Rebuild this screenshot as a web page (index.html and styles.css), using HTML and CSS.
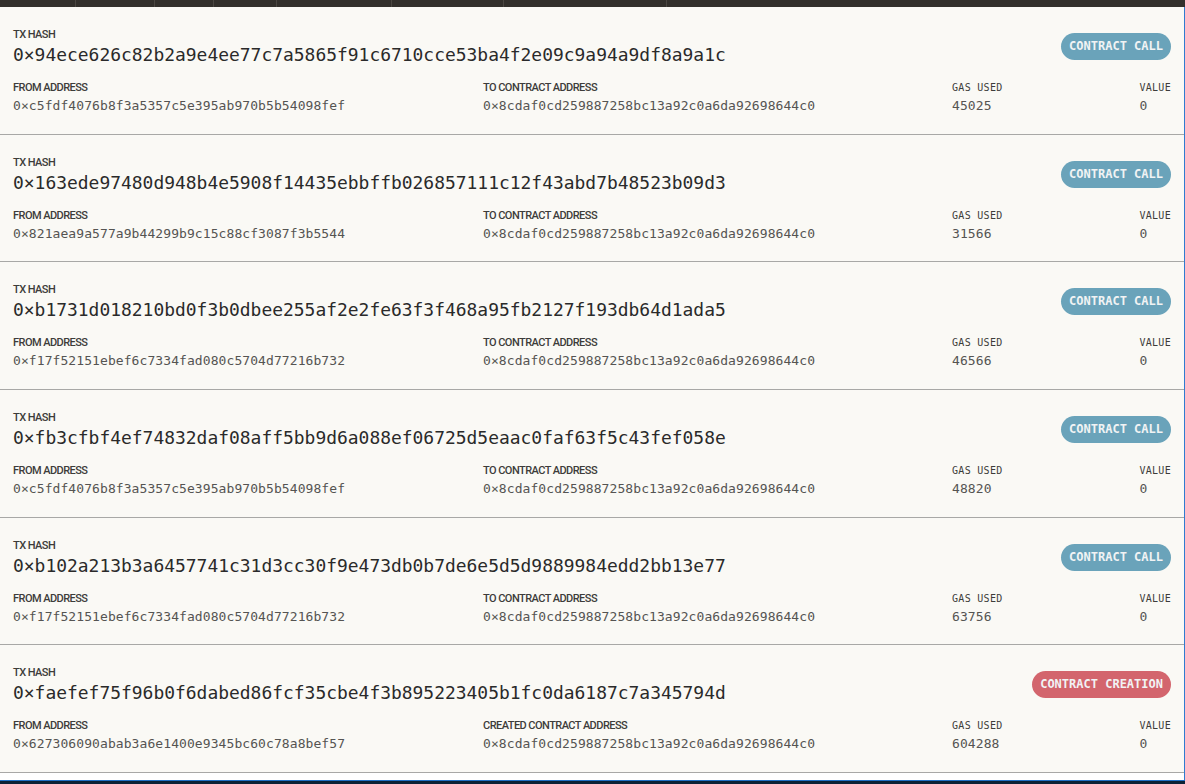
FILE: index.html
```html
<!DOCTYPE html>
<html>
<head>
<meta charset="utf-8">
<link rel="stylesheet" href="styles.css">
</head>
<body>
<div class="app">
  <div class="topbar">
    <div class="tb w1"></div><div class="tb w2"></div><div class="tb w3"></div><div class="tb w4"></div><div class="tb w5"></div><div class="tb w6"></div><div class="tb w7"></div>
  </div>
  <main class="content">
    <div class="tx">
      <div class="tx-top">
        <div>
          <div class="label">TX HASH</div>
          <div class="hash">0×94ece626c82b2a9e4ee77c7a5865f91c6710cce53ba4f2e09c9a94a9df8a9a1c</div>
        </div>
        <span class="badge call">CONTRACT CALL</span>
      </div>
      <div class="tx-info">
        <div><div class="label">FROM ADDRESS</div><div class="addr">0×c5fdf4076b8f3a5357c5e395ab970b5b54098fef</div></div>
        <div><div class="label">TO CONTRACT ADDRESS</div><div class="addr">0×8cdaf0cd259887258bc13a92c0a6da92698644c0</div></div>
        <div><div class="mlabel">GAS USED</div><div class="addr">45025</div></div>
        <div><div class="mlabel">VALUE</div><div class="addr">0</div></div>
      </div>
    </div>
    <div class="tx">
      <div class="tx-top">
        <div>
          <div class="label">TX HASH</div>
          <div class="hash">0×163ede97480d948b4e5908f14435ebbffb026857111c12f43abd7b48523b09d3</div>
        </div>
        <span class="badge call">CONTRACT CALL</span>
      </div>
      <div class="tx-info">
        <div><div class="label">FROM ADDRESS</div><div class="addr">0×821aea9a577a9b44299b9c15c88cf3087f3b5544</div></div>
        <div><div class="label">TO CONTRACT ADDRESS</div><div class="addr">0×8cdaf0cd259887258bc13a92c0a6da92698644c0</div></div>
        <div><div class="mlabel">GAS USED</div><div class="addr">31566</div></div>
        <div><div class="mlabel">VALUE</div><div class="addr">0</div></div>
      </div>
    </div>
    <div class="tx">
      <div class="tx-top">
        <div>
          <div class="label">TX HASH</div>
          <div class="hash">0×b1731d018210bd0f3b0dbee255af2e2fe63f3f468a95fb2127f193db64d1ada5</div>
        </div>
        <span class="badge call">CONTRACT CALL</span>
      </div>
      <div class="tx-info">
        <div><div class="label">FROM ADDRESS</div><div class="addr">0×f17f52151ebef6c7334fad080c5704d77216b732</div></div>
        <div><div class="label">TO CONTRACT ADDRESS</div><div class="addr">0×8cdaf0cd259887258bc13a92c0a6da92698644c0</div></div>
        <div><div class="mlabel">GAS USED</div><div class="addr">46566</div></div>
        <div><div class="mlabel">VALUE</div><div class="addr">0</div></div>
      </div>
    </div>
    <div class="tx">
      <div class="tx-top">
        <div>
          <div class="label">TX HASH</div>
          <div class="hash">0×fb3cfbf4ef74832daf08aff5bb9d6a088ef06725d5eaac0faf63f5c43fef058e</div>
        </div>
        <span class="badge call">CONTRACT CALL</span>
      </div>
      <div class="tx-info">
        <div><div class="label">FROM ADDRESS</div><div class="addr">0×c5fdf4076b8f3a5357c5e395ab970b5b54098fef</div></div>
        <div><div class="label">TO CONTRACT ADDRESS</div><div class="addr">0×8cdaf0cd259887258bc13a92c0a6da92698644c0</div></div>
        <div><div class="mlabel">GAS USED</div><div class="addr">48820</div></div>
        <div><div class="mlabel">VALUE</div><div class="addr">0</div></div>
      </div>
    </div>
    <div class="tx">
      <div class="tx-top">
        <div>
          <div class="label">TX HASH</div>
          <div class="hash">0×b102a213b3a6457741c31d3cc30f9e473db0b7de6e5d5d9889984edd2bb13e77</div>
        </div>
        <span class="badge call">CONTRACT CALL</span>
      </div>
      <div class="tx-info">
        <div><div class="label">FROM ADDRESS</div><div class="addr">0×f17f52151ebef6c7334fad080c5704d77216b732</div></div>
        <div><div class="label">TO CONTRACT ADDRESS</div><div class="addr">0×8cdaf0cd259887258bc13a92c0a6da92698644c0</div></div>
        <div><div class="mlabel">GAS USED</div><div class="addr">63756</div></div>
        <div><div class="mlabel">VALUE</div><div class="addr">0</div></div>
      </div>
    </div>
    <div class="tx">
      <div class="tx-top">
        <div>
          <div class="label">TX HASH</div>
          <div class="hash">0×faefef75f96b0f6dabed86fcf35cbe4f3b895223405b1fc0da6187c7a345794d</div>
        </div>
        <span class="badge create">CONTRACT CREATION</span>
      </div>
      <div class="tx-info">
        <div><div class="label">FROM ADDRESS</div><div class="addr">0×627306090abab3a6e1400e9345bc60c78a8bef57</div></div>
        <div><div class="label">CREATED CONTRACT ADDRESS</div><div class="addr">0×8cdaf0cd259887258bc13a92c0a6da92698644c0</div></div>
        <div><div class="mlabel">GAS USED</div><div class="addr">604288</div></div>
        <div><div class="mlabel">VALUE</div><div class="addr">0</div></div>
      </div>
    </div>
  </main>
  <div class="taskbar"></div>
</div>
</body>
</html>
```

FILE: styles.css
```css
html, body {
  margin: 0;
  padding: 0;
  width: 1185px;
  height: 784px;
  overflow: hidden;
  background: #ffffff;
}

.app {
  display: flex;
  flex-direction: column;
  height: 784px;
}

.topbar {
  display: flex;
  height: 7px;
  background: #33302c;
  flex: none;
}

.tb {
  height: 7px;
  border-right: 1px solid #4b4742;
}
.w1 { width: 75px; }
.w2 { width: 78px; }
.w3 { width: 58px; }
.w4 { width: 62px; }
.w5 { width: 114px; }
.w6 { width: 111px; }
.w7 { width: 162px; }

.content {
  flex: 1;
  background: #ffffff;
  border-right: 1px solid #2f7bd0;
  overflow: hidden;
}

.tx {
  background: #faf9f5;
  border-bottom: 1px solid #a8a8a6;
  padding: 21px 13px 19.7px 13px;
}

.tx-top {
  display: flex;
  justify-content: space-between;
  align-items: center;
}

.label {
  font-family: Roboto, "Liberation Sans", sans-serif;
  font-size: 11px;
  font-weight: 500;
  line-height: 13px;
  letter-spacing: -0.55px;
  color: #3d3c3a;
}

.mlabel {
  font-family: "DejaVu Sans Mono", "Liberation Mono", monospace;
  font-size: 10px;
  line-height: 13px;
  letter-spacing: 0.3px;
  color: #3d3c3a;
}

.hash {
  margin-top: 3px;
  font-family: "DejaVu Sans Mono", "Liberation Mono", monospace;
  font-size: 17.95px;
  line-height: 21px;
  color: #2a2a2a;
}

.tx-info {
  margin-top: 16px;
  display: grid;
  grid-template-columns: 470px 469px 1fr auto;
}

.addr {
  margin-top: 4px;
  font-family: "DejaVu Sans Mono", "Liberation Mono", monospace;
  font-size: 13px;
  line-height: 16px;
  letter-spacing: 0.08px;
  color: #555452;
}

.badge {
  display: inline-block;
  height: 27px;
  line-height: 27px;
  padding: 0 8px;
  border-radius: 14px;
  font-family: "DejaVu Sans Mono", "Liberation Mono", monospace;
  font-size: 12px;
  font-weight: bold;
  color: #f1f3f4;
  white-space: nowrap;
}

.badge.call { background: #6aa3ba; }
.badge.create { background: #d3656d; }

.taskbar {
  height: 3px;
  flex: none;
  background: #0c2135;
  border-top: 1px solid #1f6fc4;
}
```
